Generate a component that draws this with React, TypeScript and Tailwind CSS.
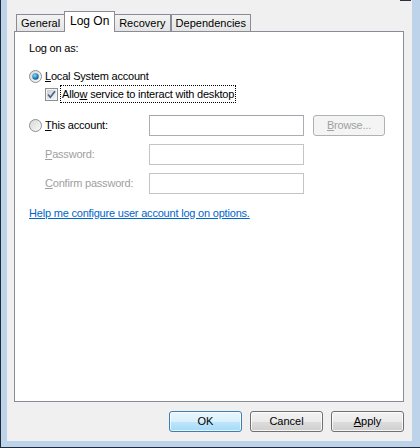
import React from "react";

const font = { fontFamily: '"Liberation Sans", Arial, sans-serif' };

function Radio({ checked }: { checked?: boolean }) {
  return (
    <svg width="13" height="13" viewBox="0 0 13 13" className="shrink-0">
      <defs>
        <linearGradient id={checked ? "rg-on" : "rg-off"} x1="0" y1="0" x2="1" y2="1">
          <stop offset="0" stopColor="#d6d6d6" />
          <stop offset="1" stopColor="#fbfbfb" />
        </linearGradient>
        <radialGradient id="dot" cx="0.4" cy="0.35" r="0.7">
          <stop offset="0" stopColor="#8fd8f8" />
          <stop offset="0.55" stopColor="#2a8bc4" />
          <stop offset="1" stopColor="#0d4f7c" />
        </radialGradient>
      </defs>
      <circle cx="6.5" cy="6.5" r="6" fill={`url(#${checked ? "rg-on" : "rg-off"})`} stroke="#8e8f8f" />
      {checked && <circle cx="6.5" cy="6.5" r="3.2" fill="url(#dot)" />}
    </svg>
  );
}

function Checkbox() {
  return (
    <svg width="13" height="13" viewBox="0 0 13 13" className="shrink-0">
      <defs>
        <linearGradient id="cb" x1="0" y1="0" x2="1" y2="1">
          <stop offset="0" stopColor="#cbcfd5" />
          <stop offset="1" stopColor="#f6f6f6" />
        </linearGradient>
      </defs>
      <rect x="0.5" y="0.5" width="12" height="12" fill="#f4f4f4" stroke="#8e8f8f" />
      <rect x="2" y="2" width="9" height="9" fill="url(#cb)" />
      <path d="M3 6.5 L5.3 9.2 L10 3.2" fill="none" stroke="#4a5f85" strokeWidth="1.6" />
    </svg>
  );
}

function Tab({ label, active }: { label: string; active?: boolean }) {
  if (active) {
    return (
      <div className="relative z-10 -mx-[1px] -mb-[1px] flex h-[21px] w-[51px] items-center justify-center self-end border border-b-0 border-[#898c95] bg-white pb-[3px] text-[12px] text-black">
        {label}
      </div>
    );
  }
  return (
    <div className="flex h-[17px] items-center justify-center self-end border border-b-0 border-[#898c95] bg-[linear-gradient(#f3f3f3,#e4e4e4)] px-[4px] text-[11px] text-black">
      {label}
    </div>
  );
}

function Field({ disabled }: { disabled?: boolean }) {
  return (
    <div
      className={`h-[21px] w-[155px] border bg-white ${
        disabled ? "border-[#c2c4c8]" : "border-[#abadb3] border-t-[#a0a4ab]"
      }`}
    />
  );
}

function DialogButton({ children, primary }: { children: React.ReactNode; primary?: boolean }) {
  return (
    <div
      className={`flex h-[21px] w-[73px] items-center justify-center rounded-[3px] border text-[11px] text-black ${
        primary
          ? "border-[#3c7fb1] bg-[linear-gradient(#eaf6fd_0%,#d9f0fc_50%,#bee6fd_51%,#a7d9f5_100%)] shadow-[inset_0_0_0_1px_rgba(255,255,255,0.7)]"
          : "border-[#707070] bg-[linear-gradient(#f2f2f2_0%,#ebebeb_50%,#dddddd_51%,#cfcfcf_100%)] shadow-[inset_0_0_0_1px_rgba(255,255,255,0.8)]"
      }`}
    >
      {children}
    </div>
  );
}

export default function App() {
  return (
    <div className="relative h-[448px] w-[420px] overflow-hidden" style={font}>
      {/* window frame */}
      <div className="flex h-full w-full border-b border-l border-[#1f2a36]">
        <div className="flex h-full w-full border-b-[6px] border-l-[6px] border-r-[8px] border-[#bcd3ea]">
          <div className="flex h-full w-full flex-col bg-[#f0f0f0] pl-[7px] pr-[8px] pt-[11px]">
            {/* tab strip */}
            <div className="flex h-[20px] items-end pl-[2px]">
              <Tab label="General" />
              <Tab label="Log On" active />
              <Tab label="Recovery" />
              <Tab label="Dependencies" />
            </div>

            {/* tab page */}
            <div className="flex h-[371px] flex-col border border-[#898c95] bg-white pl-[14px] pt-[9px] text-[11px] tracking-[-0.2px] text-black">
              <div className="flex h-[14px] items-center">Log on as:</div>

              <div className="mt-[13px] flex h-[16px] items-center gap-[3px]">
                <Radio checked />
                <span>
                  <u>L</u>ocal System account
                </span>
              </div>

              <div className="mt-[2px] flex h-[16px] items-center gap-[3px] pl-[16px]">
                <Checkbox />
                <span className="px-[1px] outline outline-1 outline-dotted outline-black">
                  Allo<u>w</u> service to interact with desktop
                </span>
              </div>

              <div className="mt-[13px] flex h-[21px] items-center">
                <div className="flex w-[120px] items-center gap-[3px]">
                  <Radio />
                  <span>
                    <u>T</u>his account:
                  </span>
                </div>
                <Field />
                <div className="ml-[9px] flex h-[21px] w-[72px] items-center justify-center rounded-[3px] border border-[#adb2b5] bg-[#f4f4f4] text-[#a0a0a0]">
                  <span>
                    <u>B</u>rowse...
                  </span>
                </div>
              </div>

              <div className="mt-[8px] flex h-[21px] items-center text-[#a0a0a0]">
                <div className="w-[120px] pl-[16px]">
                  <u>P</u>assword:
                </div>
                <Field disabled />
              </div>

              <div className="mt-[8px] flex h-[21px] items-center text-[#a0a0a0]">
                <div className="w-[120px] pl-[16px]">
                  <u>C</u>onfirm password:
                </div>
                <Field disabled />
              </div>

              <div className="mt-[12px] flex h-[14px] items-center">
                <span className="text-[#0066cc] underline">Help me configure user account log on options.</span>
              </div>
            </div>

            {/* dialog buttons */}
            <div className="mt-[9px] flex justify-end gap-[8px]">
              <DialogButton primary>OK</DialogButton>
              <DialogButton>Cancel</DialogButton>
              <DialogButton>
                <u>A</u>pply
              </DialogButton>
            </div>
          </div>
        </div>
      </div>
      {/* title bar edge peeking at the top */}
      <div className="absolute right-[9px] top-0 h-[1px] w-[11px] bg-[#2a3440]" />
    </div>
  );
}
